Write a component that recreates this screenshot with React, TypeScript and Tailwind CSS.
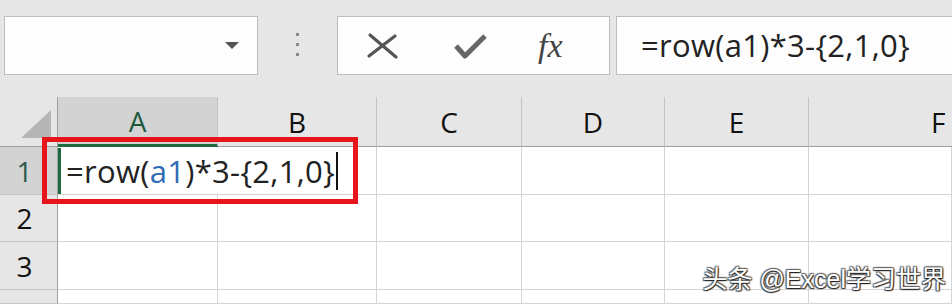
const font = { fontFamily: '"Open Sans", "Noto Sans", sans-serif' };

function Toolbar() {
  return (
    <div className="flex items-start h-[97px] bg-[#e6e6e6] pt-[16px] pl-[4px]">
      <div className="flex items-center justify-end w-[254px] h-[59px] bg-[#fdfdfd] border border-[#bdbdbd] pr-[18px]">
        <svg width="14" height="8" viewBox="0 0 14 8">
          <path d="M0 0 H14 L7 7 Z" fill="#555" />
        </svg>
      </div>
      <div className="flex flex-col gap-[7px] w-[79px] items-center pt-[17px]">
        <div className="w-[3px] h-[3px] bg-[#8a8a8a]" />
        <div className="w-[3px] h-[3px] bg-[#8a8a8a]" />
        <div className="w-[3px] h-[3px] bg-[#8a8a8a]" />
      </div>
      <div className="flex items-center w-[273px] h-[59px] bg-[#fdfdfd] border border-[#bdbdbd]">
        <svg className="ml-[28px]" width="34" height="30" viewBox="0 0 34 30">
          <path d="M4 4 L30 26 M29 5 L3 25" stroke="#555" strokeWidth="3.2" strokeLinecap="round" />
        </svg>
        <svg className="ml-[52px]" width="36" height="30" viewBox="0 0 36 30">
          <path d="M4 15 L13 25 L33 5" stroke="#666" strokeWidth="5" fill="none" strokeLinejoin="round" />
        </svg>
        <span
          className="ml-[50px] text-[34px] italic text-[#444] leading-none"
          style={{ fontFamily: '"Liberation Serif", "DejaVu Serif", serif' }}
        >
          fx
        </span>
      </div>
      <div className="flex-1 ml-[6px] h-[59px] bg-[#fdfdfd] border-y border-l border-[#bdbdbd] flex items-center pl-[24px]">
        <span className="text-[31px] tracking-[0.3px] text-[#222]" style={font}>
          =row(a1)*3-{'{'}2,1,0{'}'}
        </span>
      </div>
    </div>
  );
}

const cols = ['A', 'B', 'C', 'D', 'E', 'F'];

function Grid() {
  return (
    <div className="relative grid grid-cols-[58px_160px_159px_145px_143px_144px_1fr] grid-rows-[50px_48px_47px_48px_14px] bg-white" style={font}>
      <div className="bg-[#e6e6e6] border-r border-b border-[#9e9e9e] flex items-end justify-end pr-[6px] pb-[8px]">
        <svg width="30" height="28" viewBox="0 0 30 28">
          <path d="M30 0 V28 H0 Z" fill="#b5b5b5" />
        </svg>
      </div>
      {cols.map((c, i) => (
        <div
          key={c}
          className={
            i === 0
              ? 'bg-[#d3d3d3] border-b-[3px] border-b-[#1e6b40] border-r border-r-[#c4c4c4] flex items-center justify-center text-[28px] text-[#1e5b3c]'
              : i === 5
              ? 'bg-[#e6e6e6] border-b border-b-[#9e9e9e] flex items-center pl-[122px] text-[28px] text-[#111] overflow-hidden'
              : 'bg-[#e6e6e6] border-b border-b-[#9e9e9e] border-r border-r-[#c4c4c4] flex items-center justify-center text-[28px] text-[#111]'
          }
        >
          {c}
        </div>
      ))}
      {[1, 2, 3, 4].map((r) => (
        <>
          <div
            key={'h' + r}
            className={
              (r === 1 ? 'bg-[#d3d3d3] text-[#2d5a4c] ' : 'bg-[#e6e6e6] text-[#111] ') +
              'border-r border-r-[#9e9e9e] border-b border-b-[#c4c4c4] flex items-center justify-center text-[28px] pr-[8px]'
            }
          >
            {r < 4 ? r : ''}
          </div>
          {cols.map((c) => (
            <div key={c + r} className="border-r border-b border-[#d4d4d4]" />
          ))}
        </>
      ))}

      {/* editing cell A1 */}
      <div className="absolute left-[58px] top-[51px] w-[288px] h-[46px] bg-white flex items-center">
        <div className="w-[3px] h-full bg-[#1e6b40]" />
        <span className="ml-[5px] text-[31px] tracking-[0.3px] text-[#222] leading-none">
          =row(<span className="text-[#2f6cb3]">a1</span>)*3-{'{'}2,1,0{'}'}
        </span>
        <div className="ml-[1px] w-[2px] h-[38px] bg-[#111]" />
      </div>
      <div className="absolute left-[42px] top-[40px] w-[316px] h-[67px] border-[5px] border-[#e8141c]" />

      <div
        className="absolute right-[6px] bottom-[12px] text-[25px] text-white leading-none"
        style={{
          fontFamily: '"Liberation Sans", "Noto Sans CJK SC", sans-serif',
          textShadow: '1px 1px 1px #222, -1px -1px 1px #666, 1px -1px 1px #666, -1px 1px 1px #444',
        }}
      >
        头条 @Excel学习世界
      </div>
    </div>
  );
}

export default function App() {
  return (
    <div className="w-[952px] h-[304px] overflow-hidden bg-[#e6e6e6]">
      <Toolbar />
      <Grid />
    </div>
  );
}
